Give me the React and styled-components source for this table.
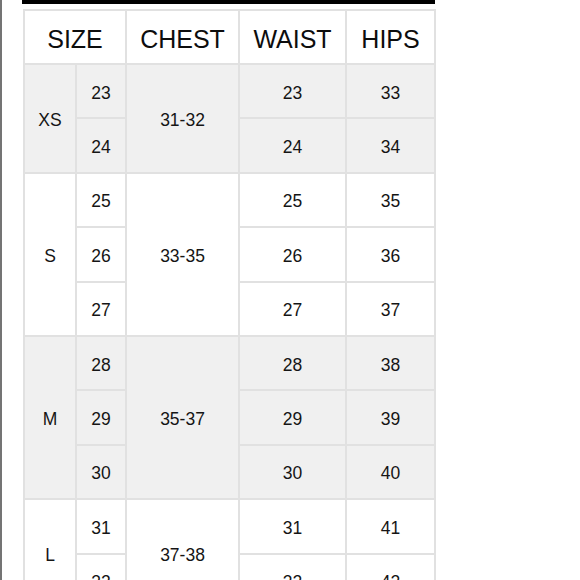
import React from 'react';
import styled, { createGlobalStyle } from 'styled-components';

const GlobalStyle = createGlobalStyle`
    html, body {
        margin: 0;
        padding: 0;
        background: #fff;
    }
    body {
        font-family: "Liberation Sans", Arial, sans-serif;
        color: #111;
    }
`;

const Page = styled.div`
    border-left: 2px solid #747474;
    padding-left: 20px;
    overflow: hidden;
    height: 580px;
    box-sizing: border-box;
`;

const TopBar = styled.div`
    width: 413px;
    height: 4px;
    background: #000;
    margin-bottom: 5px;
`;

const Table = styled.table`
    border-collapse: collapse;
    table-layout: fixed;
    width: 412px;
    margin-left: 1px;
    td, th {
        border: 2px solid #e1e1e1;
        text-align: center;
        vertical-align: middle;
        padding: 4px 0 0;
    }
`;

const HeadCell = styled.th`
    font-weight: normal;
    font-size: 25px;
    height: 48px;
    color: #0d0d0d;
`;

const Cell = styled.td`
    font-size: 17.5px;
    color: #151515;
    background: ${props => (props.$shade ? '#f0f0f0' : '#fff')};
`;

const Row = styled.tr`
    height: 54.4px;
`;

const groups = [
    { size: 'XS', chest: '31-32', rows: [[23, 23, 33], [24, 24, 34]], shade: true },
    { size: 'S', chest: '33-35', rows: [[25, 25, 35], [26, 26, 36], [27, 27, 37]], shade: false },
    { size: 'M', chest: '35-37', rows: [[28, 28, 38], [29, 29, 39], [30, 30, 40]], shade: true },
    { size: 'L', chest: '37-38', rows: [[31, 31, 41], [32, 32, 42]], shade: false },
];

const App = () => {
    return (
        <>
            <GlobalStyle />
            <Page>
                <TopBar />
                <Table>
                    <colgroup>
                        <col style={{ width: 52 }} />
                        <col style={{ width: 50 }} />
                        <col style={{ width: 113 }} />
                        <col style={{ width: 107 }} />
                        <col style={{ width: 89 }} />
                    </colgroup>
                    <thead>
                        <tr>
                            <HeadCell colSpan={2}>SIZE</HeadCell>
                            <HeadCell>CHEST</HeadCell>
                            <HeadCell>WAIST</HeadCell>
                            <HeadCell>HIPS</HeadCell>
                        </tr>
                    </thead>
                    <tbody>
                        {groups.map(g =>
                            g.rows.map(([num, waist, hips], i) => (
                                <Row key={g.size + num}>
                                    {i === 0 && <Cell $shade={g.shade} rowSpan={g.rows.length}>{g.size}</Cell>}
                                    <Cell $shade={g.shade}>{num}</Cell>
                                    {i === 0 && <Cell $shade={g.shade} rowSpan={g.rows.length}>{g.chest}</Cell>}
                                    <Cell $shade={g.shade}>{waist}</Cell>
                                    <Cell $shade={g.shade}>{hips}</Cell>
                                </Row>
                            ))
                        )}
                    </tbody>
                </Table>
            </Page>
        </>
    );
};

export default App;
